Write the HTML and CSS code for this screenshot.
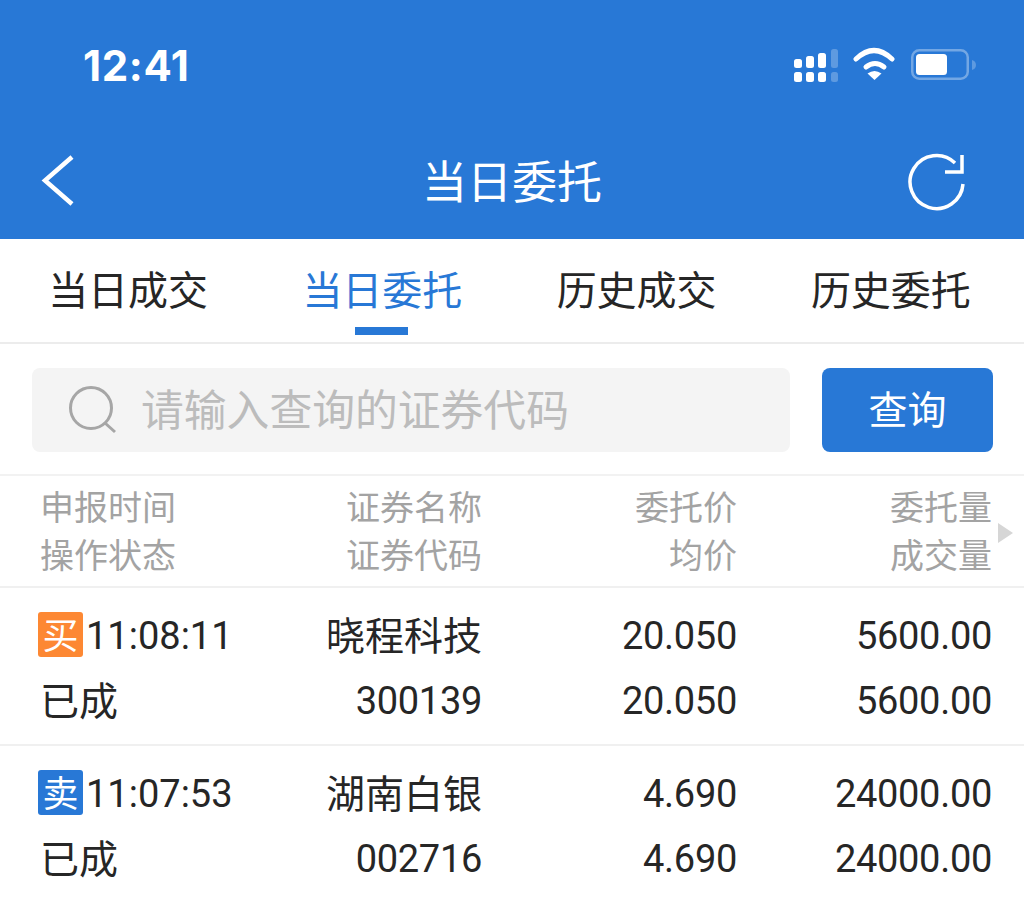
FILE: index.html
```html
<!DOCTYPE html>
<html lang="zh-CN">
<head>
<meta charset="utf-8">
<title>当日委托</title>
<link rel="stylesheet" href="styles.css">
</head>
<body>
<header class="top">
  <div class="status">
    <span class="clock">12:41</span>
    <svg class="status-icons" width="184" height="36" viewBox="0 0 184 36">
      <g fill="#fff">
        <rect x="1" y="12" width="8" height="9" rx="2.500"/><rect x="13" y="9" width="8" height="12" rx="2.500"/><rect x="25" y="6" width="8" height="15" rx="2.500"/>
        <rect x="1" y="25" width="8" height="10" rx="2.500"/><rect x="13" y="25" width="8" height="10" rx="2.500"/><rect x="25" y="25" width="8" height="10" rx="2.500"/>
        <path d="M63 12Q81-5 99 12" fill="none" stroke="#fff" stroke-width="5" stroke-linecap="round"/>
        <path d="M73 20Q82 13 91 20" fill="none" stroke="#fff" stroke-width="5" stroke-linecap="round"/>
        <path d="M81.500 33 74.500 26.500Q81.500 21.500 88.500 26.500Z"/>
        <rect x="123" y="7" width="31" height="21" rx="3.500"/>
      </g>
      <g fill="#fff" fill-opacity=".25">
        <rect x="38" y="2" width="7" height="19" rx="2.500"/><rect x="38" y="25" width="7" height="10" rx="2.500"/>
        <path d="M179 13v10c2.500-.5 4-2.500 4-5s-1.500-4.500-4-5z"/>
      </g>
      <rect x="119.250" y="3.250" width="55.500" height="28.500" rx="7" fill="none" stroke="#fff" stroke-opacity=".35" stroke-width="2.500"/>
    </svg>
  </div>
  <nav class="navbar">
    <svg class="nav-back" width="34" height="52" viewBox="0 0 34 52"><path d="M31 2 4 25.500 31 49" fill="none" stroke="#fff" stroke-width="4.500"/></svg>
    <h1 class="nav-title">当日委托</h1>
    <svg class="nav-refresh" width="60" height="60" viewBox="0 0 60 60"><path d="M55 33a26.500 26.500 0 1 1-8-21" fill="none" stroke="#fff" stroke-width="3.500"/><path d="M54 4v17H37" fill="none" stroke="#fff" stroke-width="3.500"/></svg>
  </nav>
</header>

<div class="tabs">
  <span class="tab">当日成交</span>
  <span class="tab tab-active">当日委托</span>
  <span class="tab">历史成交</span>
  <span class="tab">历史委托</span>
</div>

<div class="search-row">
  <div class="search-box">
    <svg class="search-icon" width="50" height="50" viewBox="0 0 50 50"><circle cx="23" cy="23" r="20.500" fill="none" stroke="#a6a6a6" stroke-width="3"/><path d="M37 38l10 9" fill="none" stroke="#a6a6a6" stroke-width="3"/></svg>
    <span class="placeholder">请输入查询的证券代码</span>
  </div>
  <div class="search-btn">查询</div>
</div>

<div class="table-head">
  <div class="cell head-first">申报时间</div><div class="cell num">证券名称</div><div class="cell num">委托价</div><div class="cell num">委托量</div>
  <div class="cell head-second">操作状态</div><div class="cell num">证券代码</div><div class="cell num">均价</div><div class="cell num">成交量</div>
  <span class="more-arrow"></span>
</div>

<div class="order">
  <div class="cell time"><span class="badge badge-buy">买</span>11:08:11</div><div class="cell num name">晓程科技</div><div class="cell num">20.050</div><div class="cell num">5600.00</div>
  <div class="cell state">已成</div><div class="cell num">300139</div><div class="cell num">20.050</div><div class="cell num">5600.00</div>
</div>
<div class="order">
  <div class="cell time"><span class="badge badge-sell">卖</span>11:07:53</div><div class="cell num name">湖南白银</div><div class="cell num">4.690</div><div class="cell num">24000.00</div>
  <div class="cell state">已成</div><div class="cell num">002716</div><div class="cell num">4.690</div><div class="cell num">24000.00</div>
</div>
</body>
</html>
```
FILE: styles.css
```css
* { box-sizing: border-box; }
html, body { margin: 0; padding: 0; }
body {
  width: 1024px;
  height: 900px;
  overflow: hidden;
  background: #fff;
  font-family: Roboto, "Noto Sans CJK SC", sans-serif;
  color: #262626;
}
.top { height: 239px; background: #2878d6; color: #fff; display: flex; flex-direction: column; }
.status { height: 130px; display: flex; align-items: flex-start; justify-content: space-between; padding: 44px 47px 0 83px; }
.clock { font-family: Inter, sans-serif; font-weight: 700; font-size: 42px; line-height: 44px; letter-spacing: .6px; }
.status-icons { margin-top: 3px; }
.navbar { flex: 1; display: flex; align-items: center; justify-content: space-between; padding: 0 56px 8px 41px; position: relative; }
.nav-title { position: absolute; left: 0; right: 0; top: 18px; margin: 0; text-align: center; font-family: "Noto Sans CJK SC", sans-serif; font-size: 45px; line-height: 64px; font-weight: 400; }
.nav-back, .nav-refresh { display: block; position: relative; }
.tabs { height: 105px; display: grid; grid-template-columns: repeat(4, 1fr); padding: 0 6px 0 1px; border-bottom: 2px solid #ececec; }
.tab { position: relative; font-family: "Noto Sans CJK SC", sans-serif; font-size: 40px; line-height: 98px; text-align: center; color: #262626; }
.tab-active { color: #2878d6; }
.tab-active::after { content: ""; position: absolute; left: 50%; bottom: 7px; width: 53px; height: 8px; margin-left: -27px; background: #2878d6; }
.search-row { height: 132px; display: flex; padding: 24px 31px 0 32px; gap: 32px; border-bottom: 2px solid #f2f2f2; }
.search-box { width: 758px; height: 84px; background: #f4f4f4; border-radius: 8px; display: flex; align-items: center; padding-left: 36px; gap: 23px; }
.search-icon { display: block; }
.placeholder { font-family: "Noto Sans CJK SC", sans-serif; font-size: 42.800px; line-height: 78px; padding-bottom: 6px; color: #bcbcbc; white-space: nowrap; }
.search-btn { width: 171px; height: 84px; background: #2878d6; color: #fff; border-radius: 8px; text-align: center; font-family: "Noto Sans CJK SC", sans-serif; font-size: 39px; line-height: 78px; }
.table-head, .order { display: grid; grid-template-columns: 190px 254px 255px 255px; padding: 0 32px 0 38px; position: relative; }
.table-head { height: 112px; padding-top: 8px; grid-auto-rows: 48px; border-bottom: 2px solid #f0f0f0; color: #a3a3a3; font-size: 34px; }
.table-head .cell { font-family: "Noto Sans CJK SC", sans-serif; line-height: 44px; }
.head-first { padding-left: 2px; }
.head-second { padding-left: 2px; }
.num { text-align: right; white-space: nowrap; }
.more-arrow { position: absolute; left: 998px; top: 47px; border-left: 15px solid #d6d6d6; border-top: 10px solid transparent; border-bottom: 10px solid transparent; }
.order { height: 158px; padding-top: 16px; grid-auto-rows: 65px; border-bottom: 2px solid #f0f0f0; font-size: 38px; font-weight: 400; letter-spacing: -.3px; line-height: 65px; }
.order:last-child { border-bottom: 0; }
.cell { white-space: nowrap; }
.name, .state { font-family: "Noto Sans CJK SC", sans-serif; font-size: 39px; line-height: 59px; letter-spacing: 0; }
.state { padding-left: 2px; }
.time { display: flex; align-items: center; letter-spacing: 0; }
.badge { flex: none; width: 45px; height: 45px; margin: -4px 3px 0 0; border-radius: 3px; color: #fff; font-family: "Noto Sans CJK SC", sans-serif; font-size: 36px; line-height: 42px; text-align: center; }
.badge-buy { background: #fd8833; }
.badge-sell { background: #2878d6; }
```
